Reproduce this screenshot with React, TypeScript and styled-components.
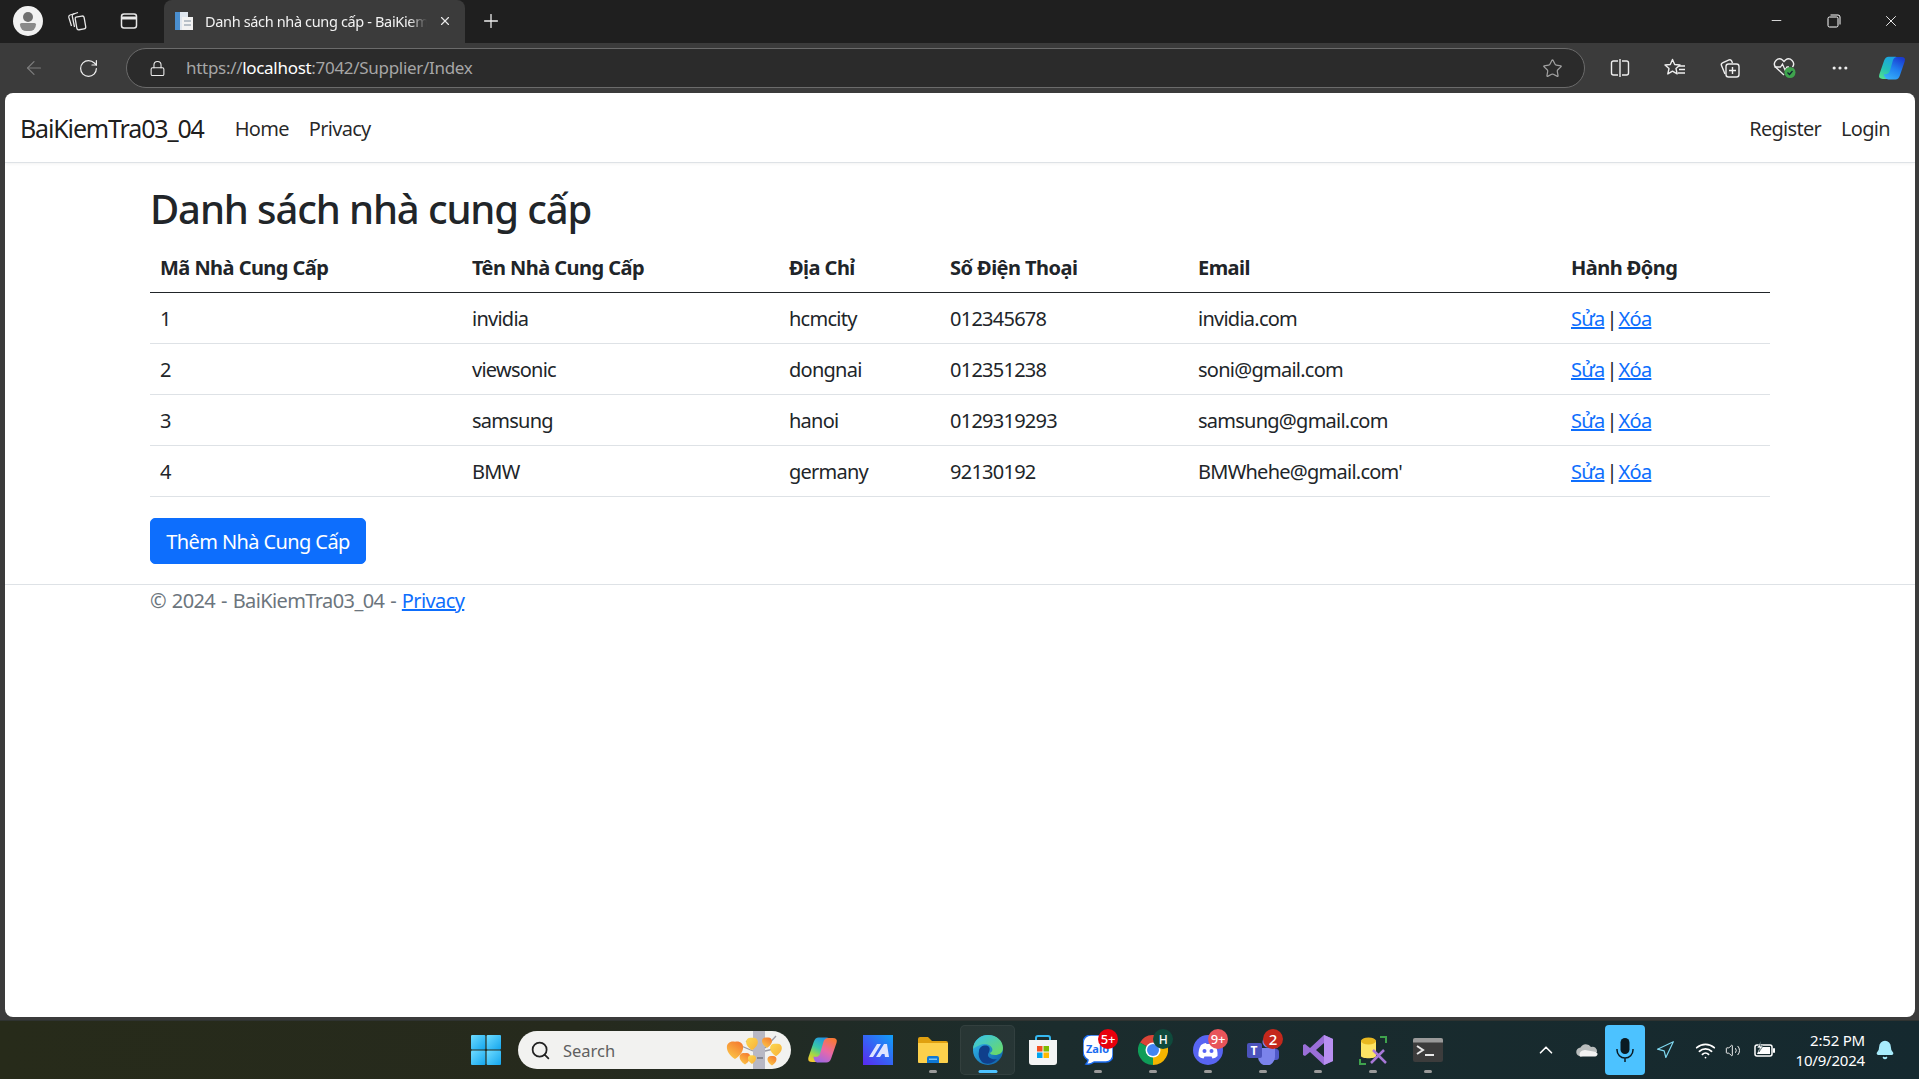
import React from "react";
import styled, { createGlobalStyle } from "styled-components";
import { ArrowLeft, RotateCw, Lock, Star, Plus, X, Minus, Search, ChevronUp, Navigation, Wifi, Volume2, Bell, MoreHorizontal } from "lucide-react";

const FONT = `"Noto Sans", "Open Sans", "Liberation Sans", sans-serif`;

const GlobalStyle = createGlobalStyle`
  html, body { margin: 0; padding: 0; height: 100%; background: #3b3b3b; }
  body { font-family: ${FONT}; overflow: hidden; }
  * { box-sizing: border-box; }
`;

const suppliers = [
  { id: 1, name: "invidia", address: "hcmcity", phone: "012345678", email: "invidia.com" },
  { id: 2, name: "viewsonic", address: "dongnai", phone: "012351238", email: "soni@gmail.com" },
  { id: 3, name: "samsung", address: "hanoi", phone: "0129319293", email: "samsung@gmail.com" },
  { id: 4, name: "BMW", address: "germany", phone: "92130192", email: "BMWhehe@gmail.com'" },
];

const Screen = styled.div`
  width: 1919px;
  height: 1079px;
  display: flex;
  flex-direction: column;
  background: #3b3b3b;
`;

const TitleBar = styled.div`
  height: 43px;
  flex: none;
  background: #1f1f1f;
  display: flex;
  align-items: flex-end;
  padding-left: 13px;
  color: #fff;
`;

const Avatar = styled.div`
  position: relative;
  width: 30px;
  height: 30px;
  border-radius: 50%;
  background: #f2f2f2;
  margin: 0 8px 7px 0;
  overflow: hidden;
`;

const AvatarHead = styled.div`
  position: absolute;
  left: 10px;
  top: 6px;
  width: 10px;
  height: 10px;
  border-radius: 50%;
  background: #6f6f6f;
`;

const AvatarBody = styled.div`
  position: absolute;
  left: 7px;
  top: 17px;
  width: 16px;
  height: 8px;
  border-radius: 2px 2px 8px 8px;
  background: #8a8a8a;
`;

const TitleIcon = styled.div`
  width: 52px;
  height: 43px;
  padding-bottom: 2px;
  display: flex;
  align-items: center;
  justify-content: center;
`;

const Tab = styled.div`
  width: 301px;
  height: 43px;
  margin-left: 9px;
  background: #3b3b3b;
  border-top-left-radius: 8px;
  border-top-right-radius: 8px;
  display: flex;
  align-items: center;
  padding: 0 13px 2px 10px;
  gap: 11px;
`;

const TabTitle = styled.div`
  flex: 1;
  font-size: 14.5px;
  white-space: nowrap;
  overflow: hidden;
  color: #f2f2f2;
  letter-spacing: -0.35px;
  -webkit-mask-image: linear-gradient(to right, #000 92%, transparent);
  mask-image: linear-gradient(to right, #000 92%, transparent);
`;

const NewTab = styled.div`
  width: 52px;
  height: 43px;
  padding-bottom: 2px;
  display: flex;
  align-items: center;
  justify-content: center;
`;

const WindowControls = styled.div`
  margin-left: auto;
  display: flex;
  height: 43px;
`;

const WindowButton = styled.div`
  width: 57px;
  height: 43px;
  padding-bottom: 2px;
  display: flex;
  align-items: center;
  justify-content: center;
`;

const Toolbar = styled.div`
  height: 50px;
  flex: none;
  background: #3b3b3b;
  display: flex;
  align-items: center;
  padding-left: 7px;
  padding-right: 2px;
`;

const ToolButton = styled.div<{ $w?: number }>`
  width: ${(p) => p.$w ?? 55}px;
  height: 40px;
  flex: none;
  display: flex;
  align-items: center;
  justify-content: center;
`;

const AddressBar = styled.div`
  flex: 1;
  height: 40px;
  margin: 0 7px 0 10px;
  border: 1px solid #6b6b6b;
  border-radius: 20px;
  background: #2b2b2b;
  display: flex;
  align-items: center;
  padding: 0 21px 0 22px;
`;

const Url = styled.div`
  margin-left: 20px;
  padding-bottom: 2px;
  flex: 1;
  font-size: 17px;
  letter-spacing: -0.3px;
  color: #a6a6a6;

  b {
    font-weight: 400;
    color: #fff;
  }
`;

const Viewport = styled.div`
  flex: 1;
  margin: 0 4px 0 5px;
  background: #fff;
  border-radius: 8px;
  display: flex;
  flex-direction: column;
  overflow: hidden;
  color: #212529;
`;

const Navbar = styled.nav`
  height: 70px;
  flex: none;
  border-bottom: 1px solid #dee2e6;
  box-shadow: 0 1px 3px rgba(0, 0, 0, 0.05);
  display: flex;
  align-items: center;
  padding: 0 15px;
`;

const Brand = styled.a`
  font-size: 25px;
  letter-spacing: -1.15px;
  margin-right: 21px;
  color: rgba(0, 0, 0, 0.9);
`;

const NavLink = styled.a`
  font-size: 20px;
  letter-spacing: -0.7px;
  padding: 2px 10px 0;
  color: rgba(0, 0, 0, 0.85);
`;

const NavSpacer = styled.div`
  flex: 1;
`;

const Main = styled.main`
  padding: 0 145px;
  height: 421px;
  flex: none;
`;

const Heading = styled.h1`
  margin: 0;
  padding-top: 22px;
  height: 70px;
  font-size: 40px;
  line-height: 48px;
  font-weight: 500;
  letter-spacing: -1.12px;
`;

const Table = styled.table`
  width: 1620px;
  border-collapse: collapse;
  table-layout: fixed;
  font-size: 20px;
  letter-spacing: -0.75px;
`;

const HeadCell = styled.th<{ $w: number }>`
  width: ${(p) => p.$w}px;
  height: 59px;
  padding: 10px 10px 0;
  text-align: left;
  font-weight: 700;
  letter-spacing: -0.55px;
  border-bottom: 1px solid #212529;
`;

const Cell = styled.td`
  height: 51px;
  padding: 2px 10px 0;
  border-bottom: 1px solid #dee2e6;
  word-spacing: -2.5px;
`;

const LinkText = styled.a`
  color: #0d6efd;
  text-decoration: underline;
`;

const AddButton = styled.button`
  display: block;
  margin-top: 21px;
  width: 216px;
  height: 46px;
  border: 1px solid #0d6efd;
  border-radius: 5px;
  background: #0d6efd;
  color: #fff;
  padding: 2px 0 0;
  font-family: ${FONT};
  font-size: 20px;
  letter-spacing: -0.6px;
`;

const Footer = styled.footer`
  border-top: 1px solid #dee2e6;
  padding: 2px 145px 0;
  font-size: 20px;
  letter-spacing: -0.6px;
  word-spacing: 1.2px;
  color: #6c757d;
`;

const Taskbar = styled.div`
  height: 59px;
  margin-top: 3px;
  flex: none;
  display: flex;
  align-items: center;
  background: linear-gradient(90deg, #272b1a 0%, #262a1d 30%, #1b2c2d 55%, #15292f 100%);
  border-top: 1px solid #2f3331;
  color: #fff;
  padding-left: 458px;
`;

const TaskItem = styled.div<{ $active?: boolean }>`
  position: relative;
  width: 55px;
  height: 50px;
  flex: none;
  display: flex;
  align-items: center;
  justify-content: center;
  border-radius: 5px;
  background: ${(p) => (p.$active ? "rgba(255,255,255,0.05)" : "transparent")};
  border: 1px solid ${(p) => (p.$active ? "rgba(255,255,255,0.05)" : "transparent")};
`;

const RunDot = styled.div<{ $active?: boolean }>`
  position: absolute;
  bottom: 1px;
  left: 50%;
  transform: translateX(-50%);
  width: ${(p) => (p.$active ? 19 : 8)}px;
  height: 3px;
  border-radius: 2px;
  background: ${(p) => (p.$active ? "#4cc2ff" : "#9a9a9a")};
`;

const Badge = styled.div<{ $bg: string; $size?: number }>`
  position: absolute;
  top: 3px;
  right: 6px;
  width: 20px;
  height: 20px;
  border-radius: 50%;
  background: ${(p) => p.$bg};
  color: #fff;
  font-size: ${(p) => p.$size ?? 13}px;
  font-weight: 500;
  letter-spacing: -0.3px;
  display: flex;
  align-items: center;
  justify-content: center;
`;

const SearchBox = styled.div`
  width: 273px;
  height: 38px;
  margin: 0 4px 0 5px;
  border-radius: 19px;
  background: #f2f2f0;
  display: flex;
  align-items: center;
  padding-left: 12px;
  gap: 12px;
  color: #5f5f5f;
  font-size: 16.5px;
  flex: none;
`;

const SearchArt = styled.div`
  margin-left: auto;
  margin-right: 3px;
  display: flex;
`;

const Tray = styled.div`
  margin-left: auto;
  display: flex;
  align-items: center;
  padding-right: 24px;
  height: 100%;
`;

const TrayIcon = styled.div<{ $w: number }>`
  width: ${(p) => p.$w}px;
  display: flex;
  align-items: center;
  justify-content: center;
`;

const MicButton = styled.div`
  width: 40px;
  height: 50px;
  border-radius: 4px;
  background: #4cc2ff;
  display: flex;
  align-items: center;
  justify-content: center;
`;

const Clock = styled.div`
  margin-left: 4px;
  width: 72px;
  text-align: right;
  font-size: 15px;
  line-height: 20px;
  letter-spacing: -0.2px;
`;

const BellWrap = styled.div`
  margin-left: 10px;
  display: flex;
`;

const PageIcon = () => (
  <svg width="20" height="20" viewBox="0 0 20 20">
    <rect x="1" y="1" width="13" height="18" fill="#dfe6ee" />
    <rect x="1" y="1" width="5" height="18" fill="#4a8fd0" />
    <rect x="8" y="6" width="11" height="13" fill="#f2f2f2" />
    <rect x="10" y="9" width="7" height="2" fill="#b8c0c8" />
    <rect x="10" y="13" width="7" height="2" fill="#b8c0c8" />
  </svg>
);

const WorkspacesIcon = () => (
  <svg width="22" height="22" viewBox="0 0 22 22" fill="none" stroke="#e8e8e8" strokeWidth="1.3">
    <path d="M9 3.5 L4 5 a2 2 0 0 0 -1.2 2.4 L5.5 16" />
    <path d="M12 2.5 L7.5 4 a2 2 0 0 0 -1.2 2.4 L8.5 17" />
    <path d="M11 6.5 h6 a2 2 0 0 1 2 2 v9 a2 2 0 0 1 -2 2 h-5 a2 2 0 0 1 -2 -2 v-9 a2 2 0 0 1 1 -2z" transform="rotate(-10 14 13)" />
  </svg>
);

const TabsIcon = () => (
  <svg width="20" height="20" viewBox="0 0 20 20" fill="none" stroke="#e8e8e8" strokeWidth="1.5">
    <rect x="2.5" y="3" width="15" height="14" rx="2.5" />
    <path d="M2.5 7 h15" strokeWidth="3" />
  </svg>
);

const RestoreIcon = () => (
  <svg width="14" height="14" viewBox="0 0 14 14" fill="none" stroke="#fff" strokeWidth="1">
    <rect x="1" y="3" width="10" height="10" rx="1.5" />
    <path d="M3.5 1 h7.5 a2 2 0 0 1 2 2 v7.5" />
  </svg>
);

const SplitIcon = () => (
  <svg width="22" height="22" viewBox="0 0 22 22" fill="none" stroke="#eee" strokeWidth="1.4">
    <path d="M9 4 H4.5 a2 2 0 0 0 -2 2 v10 a2 2 0 0 0 2 2 H9" />
    <path d="M13 4 h4.5 a2 2 0 0 1 2 2 v10 a2 2 0 0 1 -2 2 H13" />
    <path d="M11 2 v18" />
  </svg>
);

const FavoritesIcon = () => (
  <svg width="24" height="22" viewBox="0 0 24 22" fill="none" stroke="#eee" strokeWidth="1.4">
    <path d="M9.5 2.5 l2.2 5 5.3 .5 -4 3.6 1.2 5.3 -4.7 -2.8 -4.7 2.8 1.2 -5.3 -4 -3.6 5.3 -.5z" strokeLinejoin="round" />
    <path d="M16 9 h6 M16 12.5 h6 M15 16 h7" />
  </svg>
);

const CollectionsIcon = () => (
  <svg width="24" height="24" viewBox="0 0 24 24" fill="none" stroke="#eee" strokeWidth="1.4">
    <path d="M7 18 L3.5 9.5 a2 2 0 0 1 1 -2.6 l6.5 -3 a2 2 0 0 1 2.6 1 L14.5 7" />
    <rect x="8" y="8" width="13" height="13" rx="2.5" />
    <path d="M14.5 11 v7 M11 14.5 h7" />
  </svg>
);

const HealthIcon = () => (
  <svg width="26" height="24" viewBox="0 0 26 24" fill="none">
    <path d="M12 19 L3.5 11 a5 5 0 0 1 7 -7 L12 5.5 13.5 4 a5 5 0 0 1 7 7" stroke="#eee" strokeWidth="1.4" />
    <path d="M2.5 11 h6 l2 -3 2.5 6 2 -3 h2" stroke="#eee" strokeWidth="1.3" />
    <circle cx="18" cy="16.5" r="5.5" fill="#3fa34d" />
    <path d="M15.5 16.5 l2 2 3 -3.5" stroke="#123" strokeWidth="1.3" />
  </svg>
);

// same lobe twice, second one turned half way round
const COPILOT_LOBE = "M12 1 h8 q3.500 0 4.500 3 l1 3 h-2.500 q-3.500 0 -4.500 3.500 l-3.500 12 q-1 4 -5 4 H5.500 q-5.500 0 -4 -5 L7 5.500 q1.500 -4.500 5 -4.500z";

const CopilotToolbarIcon = () => (
  <svg width="28" height="26" viewBox="0 0 32 28">
    <defs>
      <linearGradient id="ctA" x1="0.7" y1="0" x2="0.2" y2="1">
        <stop offset="0" stopColor="#1a9fe8" />
        <stop offset="0.6" stopColor="#24c0b8" />
        <stop offset="1" stopColor="#50e090" />
      </linearGradient>
      <linearGradient id="ctB" x1="0.3" y1="1" x2="0.8" y2="0">
        <stop offset="0" stopColor="#1a3cd0" />
        <stop offset="0.5" stopColor="#2080f0" />
        <stop offset="1" stopColor="#38b0f8" />
      </linearGradient>
    </defs>
    <path d={COPILOT_LOBE} fill="url(#ctA)" />
    <path d={COPILOT_LOBE} fill="url(#ctB)" transform="rotate(180 16 14)" />
  </svg>
);

const WindowsLogo = () => (
  <svg width="30" height="30" viewBox="0 0 30 30">
    <defs>
      <linearGradient id="winA" x1="0" y1="0" x2="1" y2="1">
        <stop offset="0" stopColor="#6fdcff" />
        <stop offset="1" stopColor="#14a6ee" />
      </linearGradient>
    </defs>
    <rect x="0" y="0" width="14.4" height="14.4" rx="1" fill="url(#winA)" />
    <rect x="15.600" y="0" width="14.4" height="14.4" rx="1" fill="url(#winA)" />
    <rect x="0" y="15.600" width="14.4" height="14.4" rx="1" fill="url(#winA)" />
    <rect x="15.600" y="15.600" width="14.4" height="14.4" rx="1" fill="url(#winA)" />
  </svg>
);

const Leaf = ({ cx, cy, r, id }: { cx: number; cy: number; r: number; id: string }) => (
  <path
    d={`M${cx} ${cy + r * 1.1} C${cx - r * 1.3} ${cy + r * 0.3} ${cx - r * 1.1} ${cy - r} ${cx} ${cy - r * 0.8} C${cx + r * 1.1} ${cy - r} ${cx + r * 1.3} ${cy + r * 0.3} ${cx} ${cy + r * 1.1}z`}
    fill={`url(#${id})`}
  />
);

const LeafArt = () => (
  <svg width="62" height="38" viewBox="0 0 62 38">
    <defs>
      <linearGradient id="lfA" x1="0.8" y1="0" x2="0.2" y2="1">
        <stop offset="0" stopColor="#f47a30" />
        <stop offset="1" stopColor="#fcc848" />
      </linearGradient>
      <linearGradient id="lfB" x1="0" y1="0" x2="1" y2="1">
        <stop offset="0" stopColor="#fcd850" />
        <stop offset="1" stopColor="#f8b038" />
      </linearGradient>
    </defs>
    <rect x="27" y="0" width="12" height="38" fill="#b8b8c4" />
    <rect x="31" y="26" width="6" height="2" fill="#85858f" />
    <path d="M27 20 L13 14 M39 17 L50 5 M39 20 L52 17 M20 10 L27 15" stroke="#9a9aa4" strokeWidth="1.300" fill="none" />
    <Leaf cx={9} cy={18} r={9} id="lfA" />
    <Leaf cx={26} cy={12} r={6.500} id="lfB" />
    <Leaf cx={41} cy={11} r={5.500} id="lfA" />
    <Leaf cx={50} cy={18} r={6.500} id="lfB" />
    <Leaf cx={19} cy={27} r={6} id="lfA" />
    <Leaf cx={26} cy={28} r={4.500} id="lfB" />
    <Leaf cx={46} cy={29} r={5} id="lfA" />
  </svg>
);

const CopilotIcon = () => (
  <svg width="31" height="28" viewBox="0 0 32 28">
    <defs>
      <linearGradient id="cpA" x1="0.7" y1="0" x2="0.2" y2="1">
        <stop offset="0" stopColor="#2090e8" />
        <stop offset="0.45" stopColor="#38c8a8" />
        <stop offset="0.75" stopColor="#a8d840" />
        <stop offset="1" stopColor="#f8c830" />
      </linearGradient>
      <linearGradient id="cpB" x1="0.3" y1="1" x2="0.8" y2="0">
        <stop offset="0" stopColor="#f87838" />
        <stop offset="0.5" stopColor="#e868a8" />
        <stop offset="1" stopColor="#9868e8" />
      </linearGradient>
    </defs>
    <path d={COPILOT_LOBE} fill="url(#cpA)" />
    <path d={COPILOT_LOBE} fill="url(#cpB)" transform="rotate(180 16 14)" />
  </svg>
);

const MasterAppIcon = () => (
  <svg width="30" height="30" viewBox="0 0 30 30">
    <defs>
      <linearGradient id="maA" x1="0" y1="1" x2="1" y2="0">
        <stop offset="0" stopColor="#5a28f0" />
        <stop offset="1" stopColor="#10a0f8" />
      </linearGradient>
    </defs>
    <rect width="30" height="30" fill="url(#maA)" />
    <path d="M6 22 L14 9 h4 L10 22z M13 22 L21 9 h3 l2 13 h-4 l-.5 -3 h-2.500 l-2 3z" fill="#dfe4ff" />
  </svg>
);

const FolderIcon = () => (
  <svg width="32" height="28" viewBox="0 0 32 28">
    <path d="M1 3 a2 2 0 0 1 2 -2 h8 l4 4 h14 a2 2 0 0 1 2 2 v5 H1z" fill="#e0a010" />
    <path d="M1 7 h30 v19 a1 1 0 0 1 -1 1 H2 a1 1 0 0 1 -1 -1z" fill="#fcd04c" />
    <path d="M10 27 v-5 a2 2 0 0 1 2 -2 h8 a2 2 0 0 1 2 2 v5z" fill="#0f78d4" />
    <rect x="12" y="22.500" width="8" height="1.500" fill="#7cc4f4" />
  </svg>
);

const EdgeIcon = () => (
  <svg width="32" height="32" viewBox="0 0 32 32">
    <defs>
      <linearGradient id="edA" x1="0" y1="0" x2="1" y2="1">
        <stop offset="0" stopColor="#35c1f1" />
        <stop offset="1" stopColor="#0c59a4" />
      </linearGradient>
      <linearGradient id="edB" x1="0" y1="0" x2="1" y2="1">
        <stop offset="0" stopColor="#35c1f1" />
        <stop offset="1" stopColor="#6fdc5a" />
      </linearGradient>
    </defs>
    <circle cx="16" cy="16" r="15" fill="url(#edA)" />
    <path d="M1 16 C1 5 10 1 16 1 c9 0 15 6 15 13 0 5 -4 7 -8 7 -3 0 -5 -1 -5 -2 2 -1 3 -3 2 -5 -2 -4 -8 -5 -12 -3 -4 2 -7 3 -7 5z" fill="url(#edB)" />
    <path d="M7 17 c0 -5 7 -7 10 -4 2 3 -1 6 -1 8 0 3 5 5 9 4 -4 5 -11 6 -15 3 -3 -3 -4 -7 -3 -11z" fill="#0f3f8c" />
  </svg>
);

const StoreIcon = () => (
  <svg width="30" height="32" viewBox="0 0 30 32">
    <path d="M8 8 V4 a2 2 0 0 1 2 -2 h10 a2 2 0 0 1 2 2 v4" stroke="#35b8f0" strokeWidth="2" fill="none" />
    <path d="M1 6 h28 v22 a3 3 0 0 1 -3 3 H4 a3 3 0 0 1 -3 -3z" fill="#f4f4f4" />
    <rect x="9" y="12" width="5.500" height="5.500" fill="#f25022" />
    <rect x="15.500" y="12" width="5.500" height="5.500" fill="#7fba00" />
    <rect x="9" y="18.500" width="5.500" height="5.500" fill="#00a4ef" />
    <rect x="15.500" y="18.500" width="5.500" height="5.500" fill="#ffb900" />
  </svg>
);

const ZaloIcon = () => (
  <svg width="30" height="30" viewBox="0 0 30 30">
    <path d="M8 0 h15 a7 7 0 0 1 7 7 v13 a7 7 0 0 1 -7 7 H11 q-4 3 -8 2 q2 -2 2 -4 q-5 -3 -5 -9 V8 a8 8 0 0 1 8 -8z" fill="#fff" stroke="#1a6cf0" strokeWidth="1.5" />
    <text x="3" y="18" fontFamily="Noto Sans, sans-serif" fontSize="11" fontWeight="700" fill="#1a6cf0">Zalo</text>
  </svg>
);

const ChromeIcon = () => (
  <svg width="30" height="30" viewBox="0 0 30 30">
    <path d="M15 15 L2 7.500 A15 15 0 0 1 28 7.500z" fill="#db4437" />
    <path d="M15 15 L28 7.500 A15 15 0 0 1 15 30z" fill="#f4b400" />
    <path d="M15 15 L15 30 A15 15 0 0 1 2 7.500z" fill="#0f9d58" />
    <circle cx="15" cy="15" r="7.500" fill="#fff" />
    <circle cx="15" cy="15" r="6" fill="#4285f4" />
  </svg>
);

const DiscordIcon = () => (
  <svg width="30" height="30" viewBox="0 0 30 30">
    <circle cx="15" cy="15" r="15" fill="#5865f2" />
    <path d="M8 10 q3 -2 5 -2 l.5 1 h3 l.5 -1 q2 0 5 2 q3 5 2.500 11 q-2 2 -5 2.500 l-1 -2 h-7 l-1 2 q-3 -.5 -5 -2.500 q-.5 -6 2.500 -11z" fill="#fff" />
    <circle cx="11.500" cy="16" r="2" fill="#5865f2" />
    <circle cx="18.500" cy="16" r="2" fill="#5865f2" />
  </svg>
);

const TeamsIcon = () => (
  <svg width="32" height="30" viewBox="0 0 32 30">
    <circle cx="21" cy="7" r="5.500" fill="#7b83eb" />
    <circle cx="28" cy="10" r="3.500" fill="#5059c9" />
    <rect x="24" y="14" width="8" height="11" rx="3" fill="#5059c9" />
    <path d="M11 13 h17 v9 a8 8 0 0 1 -17 0z" fill="#7b83eb" />
    <rect x="0" y="8" width="15" height="15" rx="2" fill="#4b53bc" />
    <text x="3.500" y="20" fontFamily="Noto Sans, sans-serif" fontSize="12" fontWeight="700" fill="#fff">T</text>
  </svg>
);

const VisualStudioIcon = () => (
  <svg width="30" height="30" viewBox="0 0 30 30">
    <path d="M21 0 L30 4 V26 L21 30 L7 17 L2 21 L0 20 V10 L2 9 L7 13z M21 8 L13 15 L21 22z" fill="#9a6fd8" />
    <path d="M21 0 L30 4 V26 L21 30z" fill="#b88ff0" />
  </svg>
);

const DbToolIcon = () => (
  <svg width="30" height="30" viewBox="0 0 30 30">
    <path d="M3 7 c0 -5 15 -5 15 0 V21 c0 3 -15 3 -15 0z" fill="#fce464" />
    <ellipse cx="10.500" cy="6" rx="7.500" ry="3.500" fill="#e8b820" />
    <path d="M22 2 h6 v6 M2 24 v5 h6" stroke="#3fa34d" strokeWidth="2" fill="none" />
    <path d="M13 28 L26 15 M15 15 L28 28" stroke="#a878d8" strokeWidth="2.500" fill="none" />
  </svg>
);

const TerminalIcon = () => (
  <svg width="30" height="24" viewBox="0 0 30 24">
    <rect width="30" height="24" rx="2" fill="#3c3c3c" />
    <path d="M0 2 a2 2 0 0 1 2 -2 h26 a2 2 0 0 1 2 2 v2.500 H0z" fill="#9a9a9a" />
    <path d="M4 8 l6 4 -6 4" stroke="#e8e8e8" strokeWidth="2" fill="none" />
    <rect x="12" y="16" width="9" height="2" fill="#e8e8e8" />
  </svg>
);

const OneDriveIcon = () => (
  <svg width="22" height="14" viewBox="0 0 22 14">
    <path d="M5 13.500 a4.500 4.500 0 0 1 -.5 -9 A6 6 0 0 1 15 4 a4.500 4.500 0 0 1 6 5 z" fill="#b8bcbc" />
    <path d="M4 13.500 h15 a2.500 2.500 0 0 0 2.500 -3 q-1 -2 -4 -2 L9 7 q-7 1 -5 6.500z" fill="#f2f2f2" />
  </svg>
);

const MicIcon = () => (
  <svg width="22" height="26" viewBox="0 0 22 26" fill="none">
    <rect x="6.500" y="1" width="9" height="16" rx="4.500" fill="#0a1a22" />
    <path d="M3 12 v1 a8 8 0 0 0 16 0 v-1 M11 21 v4" stroke="#0a1a22" strokeWidth="1.500" />
  </svg>
);

const BatteryIcon = () => (
  <svg width="22" height="18" viewBox="0 0 22 18" fill="none">
    <rect x="1" y="4" width="17" height="11" rx="2" stroke="#fff" strokeWidth="1.500" />
    <rect x="19" y="7" width="2" height="5" rx="1" fill="#fff" />
    <path d="M3 13 L6 6 h10 v7z" fill="#fff" />
    <path d="M7 0 L3 7 h3 l-1 4 4 -6 H6z" fill="#fff" stroke="#153036" strokeWidth=".6" />
  </svg>
);

const App: React.FC = () => {
  return (
    <Screen>
      <GlobalStyle />
      <TitleBar>
        <Avatar>
          <AvatarHead />
          <AvatarBody />
        </Avatar>
        <TitleIcon>
          <WorkspacesIcon />
        </TitleIcon>
        <TitleIcon>
          <TabsIcon />
        </TitleIcon>
        <Tab>
          <PageIcon />
          <TabTitle>Danh sách nhà cung cấp - BaiKiemTra03_04</TabTitle>
          <X size={14} color="#e8e8e8" />
        </Tab>
        <NewTab>
          <Plus size={22} color="#eee" strokeWidth={1.4} />
        </NewTab>
        <WindowControls>
          <WindowButton>
            <Minus size={15} color="#fff" strokeWidth={1.3} />
          </WindowButton>
          <WindowButton>
            <RestoreIcon />
          </WindowButton>
          <WindowButton>
            <X size={18} color="#fff" strokeWidth={1.2} />
          </WindowButton>
        </WindowControls>
      </TitleBar>

      <Toolbar>
        <ToolButton $w={54}>
          <ArrowLeft size={22} color="#7d7d7d" strokeWidth={1.3} />
        </ToolButton>
        <ToolButton>
          <RotateCw size={21} color="#eee" strokeWidth={1.4} />
        </ToolButton>
        <AddressBar>
          <Lock size={17} color="#eee" strokeWidth={1.5} />
          <Url>
            https://<b>localhost</b>:7042/Supplier/Index
          </Url>
          <Star size={21} color="#a0a0a0" strokeWidth={1.4} />
        </AddressBar>
        <ToolButton>
          <SplitIcon />
        </ToolButton>
        <ToolButton>
          <FavoritesIcon />
        </ToolButton>
        <ToolButton>
          <CollectionsIcon />
        </ToolButton>
        <ToolButton>
          <HealthIcon />
        </ToolButton>
        <ToolButton>
          <MoreHorizontal size={20} color="#eee" strokeWidth={1.8} />
        </ToolButton>
        <ToolButton $w={50}>
          <CopilotToolbarIcon />
        </ToolButton>
      </Toolbar>

      <Viewport>
        <Navbar>
          <Brand>BaiKiemTra03_04</Brand>
          <NavLink>Home</NavLink>
          <NavLink>Privacy</NavLink>
          <NavSpacer />
          <NavLink>Register</NavLink>
          <NavLink>Login</NavLink>
        </Navbar>
        <Main>
          <Heading>Danh sách nhà cung cấp</Heading>
          <Table>
            <thead>
              <tr>
                <HeadCell $w={312}>Mã Nhà Cung Cấp</HeadCell>
                <HeadCell $w={317}>Tên Nhà Cung Cấp</HeadCell>
                <HeadCell $w={161}>Địa Chỉ</HeadCell>
                <HeadCell $w={248}>Số Điện Thoại</HeadCell>
                <HeadCell $w={373}>Email</HeadCell>
                <HeadCell $w={209}>Hành Động</HeadCell>
              </tr>
            </thead>
            <tbody>
              {suppliers.map((s) => (
                <tr key={s.id}>
                  <Cell>{s.id}</Cell>
                  <Cell>{s.name}</Cell>
                  <Cell>{s.address}</Cell>
                  <Cell>{s.phone}</Cell>
                  <Cell>{s.email}</Cell>
                  <Cell>
                    <LinkText>Sửa</LinkText> | <LinkText>Xóa</LinkText>
                  </Cell>
                </tr>
              ))}
            </tbody>
          </Table>
          <AddButton>Thêm Nhà Cung Cấp</AddButton>
        </Main>
        <Footer>
          © 2024 - BaiKiemTra03_04 - <LinkText>Privacy</LinkText>
        </Footer>
      </Viewport>

      <Taskbar>
        <TaskItem>
          <WindowsLogo />
        </TaskItem>
        <SearchBox>
          <Search size={21} color="#222" strokeWidth={2} />
          Search
          <SearchArt>
            <LeafArt />
          </SearchArt>
        </SearchBox>
        <TaskItem>
          <CopilotIcon />
        </TaskItem>
        <TaskItem>
          <MasterAppIcon />
        </TaskItem>
        <TaskItem>
          <FolderIcon />
          <RunDot />
        </TaskItem>
        <TaskItem $active>
          <EdgeIcon />
          <RunDot $active />
        </TaskItem>
        <TaskItem>
          <StoreIcon />
        </TaskItem>
        <TaskItem>
          <ZaloIcon />
          <Badge $bg="#e8000d">5+</Badge>
          <RunDot />
        </TaskItem>
        <TaskItem>
          <ChromeIcon />
          <Badge $bg="#0f4a3c" $size={12}>H</Badge>
          <RunDot />
        </TaskItem>
        <TaskItem>
          <DiscordIcon />
          <Badge $bg="#e8545a">9+</Badge>
          <RunDot />
        </TaskItem>
        <TaskItem>
          <TeamsIcon />
          <Badge $bg="#c4281c" $size={15}>2</Badge>
          <RunDot />
        </TaskItem>
        <TaskItem>
          <VisualStudioIcon />
          <RunDot />
        </TaskItem>
        <TaskItem>
          <DbToolIcon />
          <RunDot />
        </TaskItem>
        <TaskItem>
          <TerminalIcon />
          <RunDot />
        </TaskItem>
        <Tray>
          <TrayIcon $w={46}>
            <ChevronUp size={22} color="#fff" strokeWidth={1.8} />
          </TrayIcon>
          <TrayIcon $w={36}>
            <OneDriveIcon />
          </TrayIcon>
          <MicButton>
            <MicIcon />
          </MicButton>
          <TrayIcon $w={40}>
            <Navigation size={20} color="#7fd8f0" strokeWidth={1.4} />
          </TrayIcon>
          <TrayIcon $w={40}>
            <Wifi size={21} color="#fff" strokeWidth={2} />
          </TrayIcon>
          <TrayIcon $w={16}>
            <Volume2 size={23} color="#eee" strokeWidth={1.5} />
          </TrayIcon>
          <TrayIcon $w={48}>
            <BatteryIcon />
          </TrayIcon>
          <Clock>
            2:52 PM
            <br />
            10/9/2024
          </Clock>
          <BellWrap>
            <Bell size={20} color="#a8ecfc" fill="#a8ecfc" />
          </BellWrap>
        </Tray>
      </Taskbar>
    </Screen>
  );
};

export default App;
